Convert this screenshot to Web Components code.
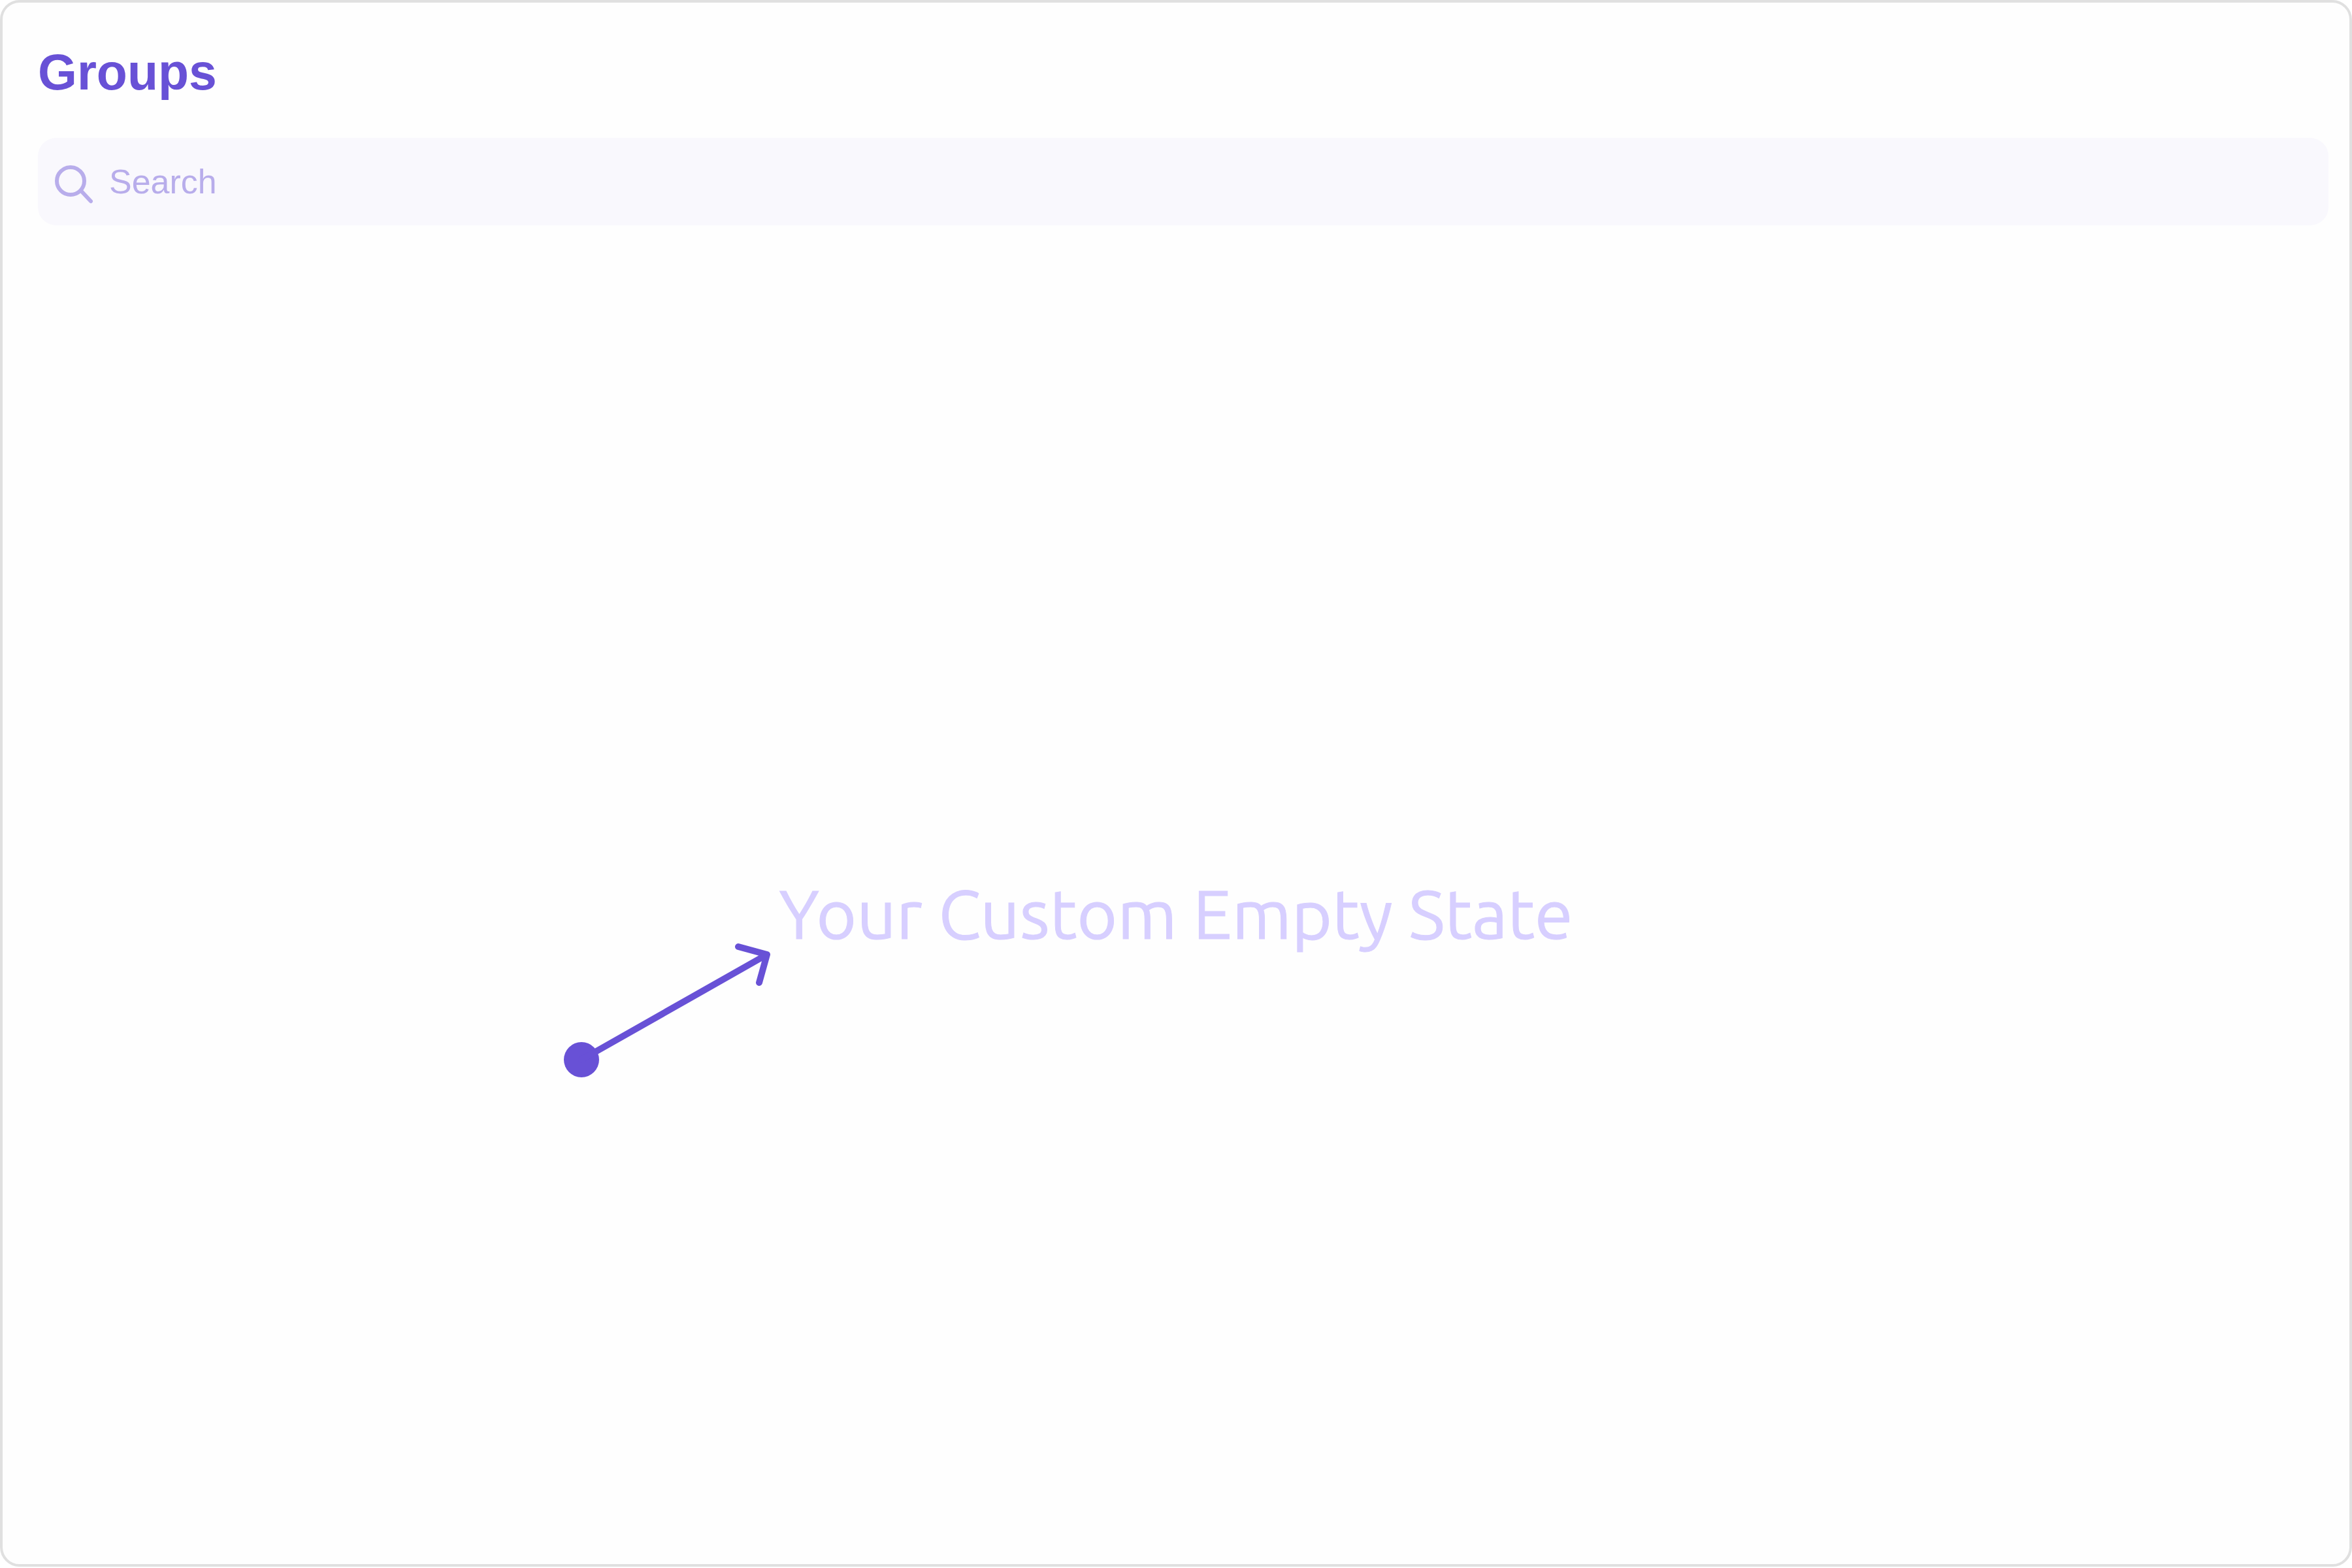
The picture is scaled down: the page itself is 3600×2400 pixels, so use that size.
<!DOCTYPE html>
<html lang="en">
<head>
<meta charset="utf-8">
<title>Groups</title>
<style>
  body { margin: 0; background: #fff; font-family: "Liberation Sans", Arial, sans-serif; }
</style>
</head>
<body>
<groups-panel>
  <span slot="title">Groups</span>
  <search-field slot="search" label="Search"></search-field>
  <empty-state>Your Custom Empty State</empty-state>
</groups-panel>
<script>
  class GroupsPanel extends HTMLElement {
    constructor() {
      super();
      this.attachShadow({ mode: "open" }).innerHTML = `
        <style>
          :host { display: block; box-sizing: border-box; height: 100vh; padding-bottom: 2px; }
          main {
            display: flex; flex-direction: column; box-sizing: border-box; height: 100%;
            padding: 62px 32px 0 54px; border: 4px solid #e0e0e0; border-radius: 30px; background: #fefefe;
          }
          h1 { margin: 0 0 57px; font-size: 77px; line-height: 88px; font-weight: 700; color: #6851d6; }
          section { flex: 1; display: flex; align-items: center; justify-content: center; padding: 56px 22px 0 0; }
        </style>
        <main>
          <h1><slot name="title"></slot></h1>
          <slot name="search"></slot>
          <section><slot></slot></section>
        </main>`;
    }
  }

  class SearchField extends HTMLElement {
    constructor() {
      super();
      this.attachShadow({ mode: "open" }).innerHTML = `
        <style>
          :host { display: block; --tint: #b8adeb; }
          label {
            display: flex; align-items: center; gap: 23px; box-sizing: border-box;
            height: 134px; padding: 0 24px; border-radius: 28px; background: #f9f8fd;
          }
          svg { flex: none; width: 62px; height: 62px; overflow: visible; fill: none; stroke: var(--tint); stroke-width: 6; stroke-linecap: round; }
          input {
            flex: 1; min-width: 0; height: 60px; padding: 0; border: 0; outline: 0; background: none;
            font: 52px/60px "Liberation Sans", Arial, sans-serif; color: #6851d6;
          }
          input::placeholder { color: var(--tint); opacity: 1; }
        </style>
        <label>
          <svg viewBox="0 0 62 62" aria-hidden="true"><circle cx="26" cy="30" r="21"/><path d="M42 45 57 61"/></svg>
          <input type="search">
        </label>`;
    }
    connectedCallback() {
      const input = this.shadowRoot.querySelector("input");
      input.placeholder = this.getAttribute("label");
      input.setAttribute("aria-label", this.getAttribute("label"));
    }
  }

  class EmptyState extends HTMLElement {
    constructor() {
      super();
      this.attachShadow({ mode: "open" }).innerHTML = `
        <style>
          :host { display: block; position: relative; }
          p {
            margin: 0; font: 400 106px/120px Ubuntu, "Noto Sans", sans-serif; color: #d7cfff;
            -webkit-text-stroke: 1px #d7cfff; white-space: nowrap;
          }
          svg {
            position: absolute; right: 100%; top: 100%; margin: -16px 11px 0 0; width: 320px; height: 210px;
            fill: none; stroke: #6851d6; stroke-width: 10; stroke-linecap: round; stroke-linejoin: round;
          }
          circle { fill: #6851d6; stroke: none; }
        </style>
        <p><slot></slot></p>
        <svg viewBox="0 0 320 210" aria-hidden="true">
          <circle cx="28" cy="180" r="27"/>
          <path d="M28 180 312 19M268 7 312 19 300 62"/>
        </svg>`;
    }
  }

  customElements.define("groups-panel", GroupsPanel);
  customElements.define("search-field", SearchField);
  customElements.define("empty-state", EmptyState);
</script>
</body>
</html>
